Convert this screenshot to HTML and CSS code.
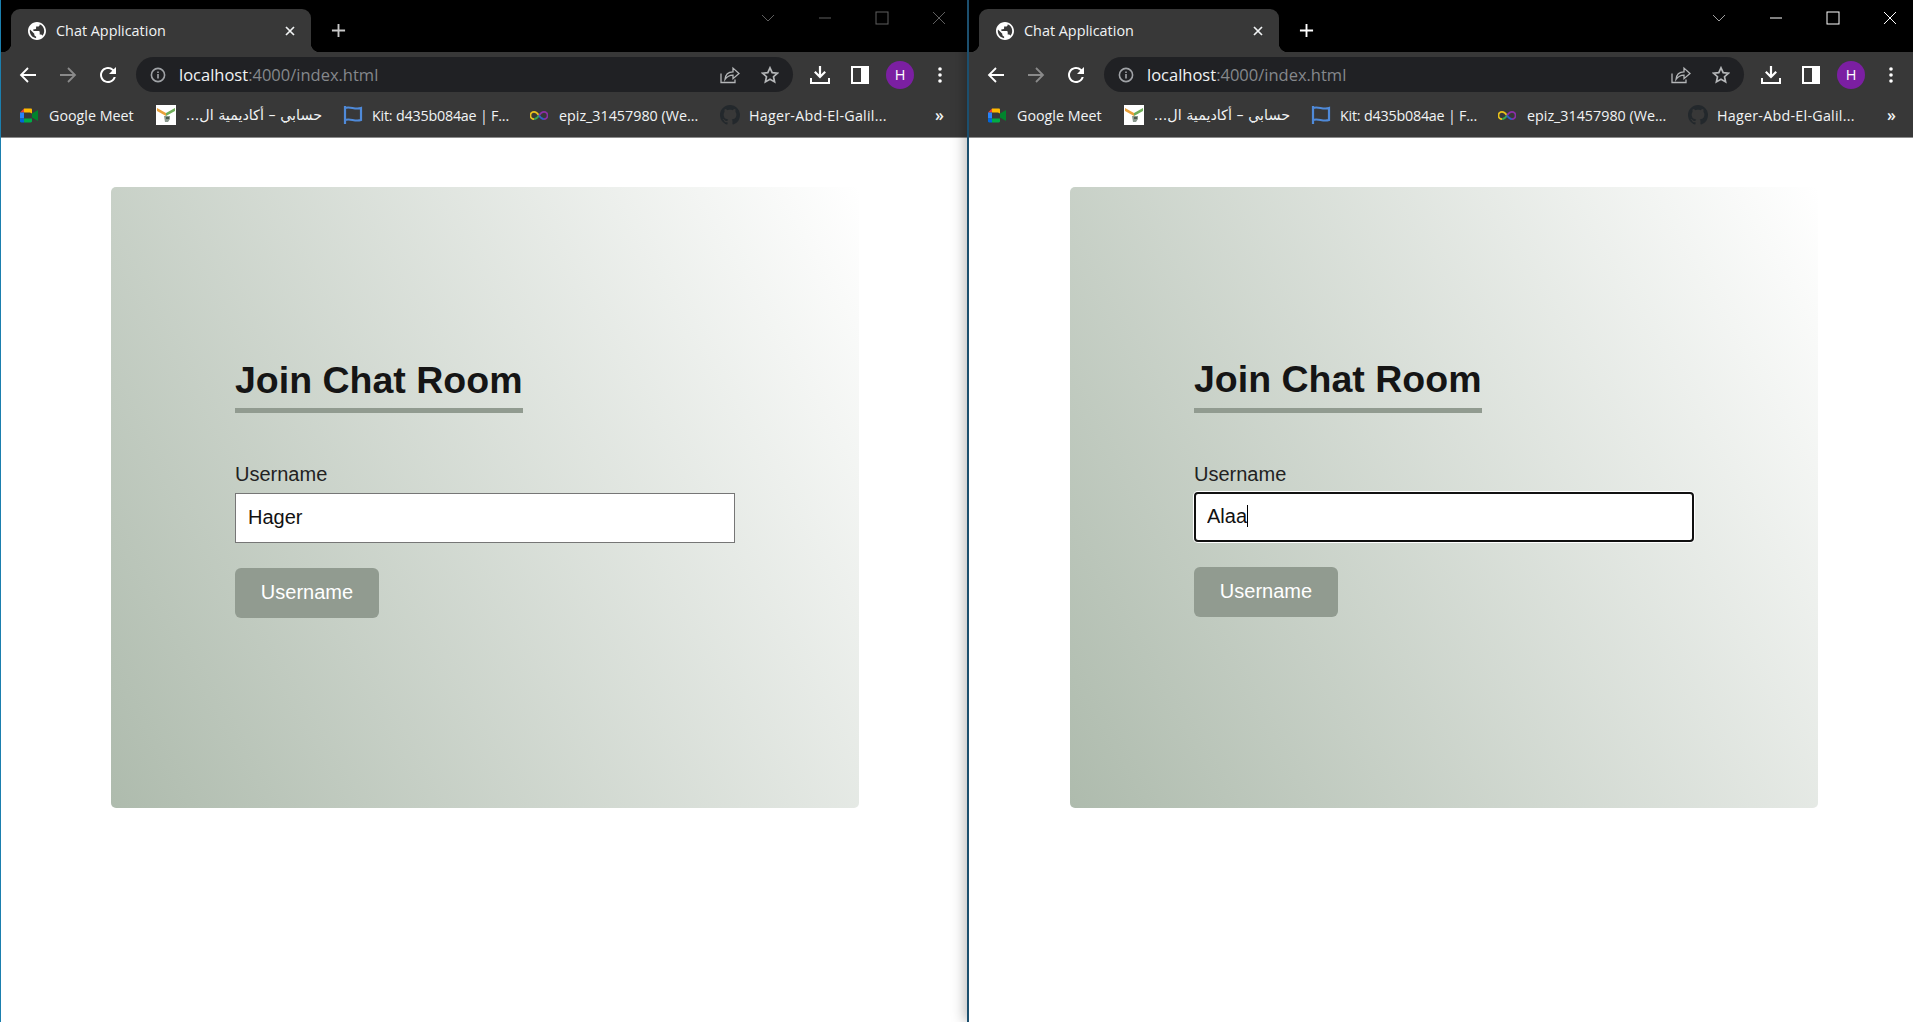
FILE: index.html
```html
<!DOCTYPE html>
<html lang="en">
<head>
    <meta charset="UTF-8">
    <meta name="viewport" content="width=device-width, initial-scale=1.0">
    <title>Chat Application</title>
    <link rel="stylesheet" href="styles.css">
</head>
<body>

<svg class="sprites" xmlns="http://www.w3.org/2000/svg">
    <symbol id="i-globe" viewBox="2 2 20 20"><path fill="#fff" d="M12 2C6.48 2 2 6.48 2 12s4.48 10 10 10 10-4.48 10-10S17.52 2 12 2zm-1 17.93c-3.95-.49-7-3.85-7-7.93 0-.62.08-1.21.21-1.79L9 15v1c0 1.1.9 2 2 2v1.93zm6.9-2.54c-.26-.81-1-1.39-1.9-1.39h-1v-3c0-.55-.45-1-1-1H8v-2h2c.55 0 1-.45 1-1V7h2c1.1 0 2-.9 2-2v-.41c2.93 1.19 5 4.06 5 7.41 0 2.08-.8 3.97-2.1 5.39z"/></symbol>
    <symbol id="i-close" viewBox="0 0 12 12"><path d="M2 2l8 8M10 2l-8 8" stroke="currentColor" stroke-width="1.7" fill="none"/></symbol>
    <symbol id="i-plus" viewBox="0 0 16 16"><path d="M8 1v14M1 8h14" stroke="currentColor" stroke-width="2" fill="none"/></symbol>
    <symbol id="i-back" viewBox="0 0 18 18"><path d="M17 9H2M9 2L2 9l7 7" stroke="currentColor" stroke-width="1.8" fill="none"/></symbol>
    <symbol id="i-forward" viewBox="0 0 18 18"><path d="M1 9h15M9 2l7 7-7 7" stroke="currentColor" stroke-width="1.8" fill="none"/></symbol>
    <symbol id="i-reload" viewBox="3 3 18 18"><path fill="currentColor" d="M17.65 6.35A7.95 7.95 0 0 0 12 4c-4.42 0-7.99 3.58-7.99 8s3.57 8 7.99 8c3.73 0 6.84-2.55 7.73-6h-2.08A5.99 5.99 0 0 1 12 18c-3.31 0-6-2.69-6-6s2.69-6 6-6c1.66 0 3.14.69 4.22 1.78L13 11h7V4l-2.35 2.35z"/></symbol>
    <symbol id="i-info" viewBox="0 0 16 16"><circle cx="8" cy="8" r="6.6" stroke="currentColor" stroke-width="1.6" fill="none"/><path d="M7.2 7h1.6v4.6H7.2zM7.2 4.4h1.6V6H7.2z" fill="currentColor"/></symbol>
    <symbol id="i-share" viewBox="0 0 20 18"><path d="M1 8v9h14v-3" stroke="currentColor" stroke-width="1.3" fill="none"/><path d="M5 14c.4-5 3.6-7.6 8-7.6V2.6l6 5.4-6 5.2V9.600c-3.500 0-6 1.400-8 4.400z" stroke="currentColor" stroke-width="1.3" fill="none"/></symbol>
    <symbol id="i-star" viewBox="0 0 18 18"><path d="M9 1.800l2.200 4.800 5.200.6-3.900 3.500 1.100 5.200L9 13.300l-4.600 2.600 1.100-5.200L1.600 7.200l5.200-.6z" stroke="currentColor" stroke-width="1.700" fill="none"/></symbol>
    <symbol id="i-download" viewBox="0 0 20 19"><path d="M10 1v10M4.800 6.800l5.200 5.200 5.200-5.200" stroke="currentColor" stroke-width="2.200" fill="none"/><path d="M1 13v5h18v-5" stroke="currentColor" stroke-width="2" fill="none"/></symbol>
    <symbol id="i-panel" viewBox="0 0 18 18"><path fill="currentColor" fill-rule="evenodd" d="M0 0h18v18H0zM2 2v14h8V2z"/></symbol>
    <symbol id="i-dots" viewBox="0 0 4 16"><circle cx="2" cy="2" r="1.800" fill="currentColor"/><circle cx="2" cy="8" r="1.800" fill="currentColor"/><circle cx="2" cy="14" r="1.800" fill="currentColor"/></symbol>
    <symbol id="i-chevron" viewBox="0 0 14 8"><path d="M1 1l6 6 6-6" stroke="currentColor" stroke-width="1" fill="none"/></symbol>
    <symbol id="i-min" viewBox="0 0 14 14"><path d="M1 7h12" stroke="currentColor" stroke-width="1" fill="none"/></symbol>
    <symbol id="i-max" viewBox="0 0 14 14"><rect x="1" y="1" width="12" height="12" stroke="currentColor" stroke-width="1" fill="none"/></symbol>
    <symbol id="i-x" viewBox="0 0 14 14"><path d="M1 1l12 12M13 1L1 13" stroke="currentColor" stroke-width="1" fill="none"/></symbol>
    <symbol id="i-meet" viewBox="0 0 18 14">
        <path fill="#ea4335" d="M4 0v4H0z"/>
        <path fill="#2684fc" d="M0 4h4v6H0z"/>
        <path fill="#0066da" d="M0 10h4v4H1.200C.5 14 0 13.500 0 12.800z"/>
        <path fill="#ffba00" d="M4 0h6.800c.7 0 1.200.5 1.200 1.200V5l-2-1H4z"/>
        <path fill="#00ac47" d="M4 10h8v2.800c0 .7-.5 1.200-1.200 1.200H4z"/>
        <path fill="#00832d" d="M12 5l1-.5L18 1.500v11L13 9.500 12 9z"/>
    </symbol>
    <symbol id="i-academy" viewBox="0 0 20 20">
        <rect width="20" height="20" fill="#fff"/>
        <path fill="#e9a13b" d="M1 3l9 5v3L1 6z"/>
        <path fill="#6fae5a" d="M19 3l-9 5v3l9-5z"/>
        <path fill="#8a9a8e" d="M8 11h6v3l-2 3H9z"/>
        <path fill="#4a5a50" d="M10 12h3v2h-3z"/>
    </symbol>
    <symbol id="i-flag" viewBox="0 0 20 20"><path d="M2 1v18M2 3c5-2 10 2 16 0v12c-6 2-11-2-16 0" stroke="#4f8ad9" stroke-width="2.200" fill="none"/></symbol>
    <symbol id="i-infinity" viewBox="0 0 20 10">
        <path d="M10 5C8 2 6.500 1 4.500 1a4 4 0 0 0 0 8" stroke="#e9c21b" stroke-width="2" fill="none"/>
        <path d="M4.500 9C6.500 9 8 8 10 5" stroke="#35a853" stroke-width="2" fill="none"/>
        <path d="M10 5c2-3 3.500-4 5.500-4a4 4 0 0 1 0 8" stroke="#8a2ea8" stroke-width="2" fill="none"/>
        <path d="M15.500 9c-2 0-3.500-1-5.500-4" stroke="#2f5fc9" stroke-width="2" fill="none"/>
    </symbol>
    <symbol id="i-github" viewBox="0 0 16 16"><path fill="#23282c" d="M8 0C3.580 0 0 3.580 0 8c0 3.540 2.290 6.530 5.470 7.590.4.07.55-.17.55-.38 0-.19-.01-.82-.01-1.490-2.010.37-2.530-.49-2.690-.94-.09-.23-.48-.94-.82-1.130-.28-.15-.68-.52-.01-.53.63-.01 1.080.58 1.230.82.72 1.210 1.870.87 2.330.66.07-.52.28-.87.51-1.070-1.780-.2-3.640-.89-3.640-3.950 0-.87.31-1.590.82-2.150-.08-.2-.36-1.020.08-2.120 0 0 .67-.21 2.200.82.64-.18 1.320-.27 2-.27.68 0 1.360.09 2 .27 1.530-1.040 2.200-.82 2.200-.82.44 1.100.16 1.920.08 2.120.51.56.82 1.270.82 2.150 0 3.070-1.870 3.750-3.650 3.950.29.25.54.73.54 1.480 0 1.070-.01 1.930-.01 2.200 0 .21.15.46.55.38A8.013 8.013 0 0 0 16 8c0-4.420-3.580-8-8-8z"/></symbol>
</svg>

<div class="desktop">

    <!-- left window -->
    <section class="window window-left">
        <div class="tabstrip">
            <div class="tab">
                <svg class="tab-favicon"><use href="#i-globe"/></svg>
                <span class="tab-title">Chat Application</span>
                <svg class="tab-close"><use href="#i-close"/></svg>
            </div>
            <svg class="new-tab"><use href="#i-plus"/></svg>
            <div class="win-controls">
                <span class="win-btn win-chevron"><svg class="ic-chevron"><use href="#i-chevron"/></svg></span>
                <span class="win-btn"><svg class="ic-win"><use href="#i-min"/></svg></span>
                <span class="win-btn"><svg class="ic-win"><use href="#i-max"/></svg></span>
                <span class="win-btn"><svg class="ic-win"><use href="#i-x"/></svg></span>
            </div>
        </div>
        <div class="toolbar">
            <span class="tool"><svg class="ic-18"><use href="#i-back"/></svg></span>
            <span class="tool tool-dim"><svg class="ic-18"><use href="#i-forward"/></svg></span>
            <span class="tool"><svg class="ic-18"><use href="#i-reload"/></svg></span>
            <div class="omnibox">
                <svg class="omni-info"><use href="#i-info"/></svg>
                <span class="omni-url">localhost<span class="omni-rest">:4000/index.html</span></span>
                <span class="tool tool-grey omni-share"><svg class="ic-20"><use href="#i-share"/></svg></span>
                <span class="tool tool-grey"><svg class="ic-18"><use href="#i-star"/></svg></span>
            </div>
            <span class="tool tool-first"><svg class="ic-20"><use href="#i-download"/></svg></span>
            <span class="tool"><svg class="ic-18"><use href="#i-panel"/></svg></span>
            <span class="tool"><span class="avatar">H</span></span>
            <span class="tool"><svg class="ic-dots"><use href="#i-dots"/></svg></span>
        </div>
        <div class="bookmarks">
            <span class="bm"><svg class="bm-icon bm-meet"><use href="#i-meet"/></svg><span class="bm-text w-86">Google Meet</span></span>
            <span class="bm"><svg class="bm-icon"><use href="#i-academy"/></svg><span class="bm-text w-137 bm-ar" dir="rtl">حسابي – أكاديمية ال...</span></span>
            <span class="bm"><svg class="bm-icon"><use href="#i-flag"/></svg><span class="bm-text w-137 bm-tight">Kit: d435b084ae | F...</span></span>
            <span class="bm"><svg class="bm-icon bm-inf"><use href="#i-infinity"/></svg><span class="bm-text w-140">epiz_31457980 (We...</span></span>
            <span class="bm"><svg class="bm-icon"><use href="#i-github"/></svg><span class="bm-text w-137 bm-wide">Hager-Abd-El-Galil...</span></span>
            <span class="bm-more">»</span>
        </div>
        <div class="page">
            <div class="card">
                <h1 class="card-title">Join Chat Room</h1>
                <form class="join-form">
                    <label class="field-label">Username</label>
                    <input class="field-input" type="text" value="Hager">
                    <button class="join-btn" type="button">Username</button>
                </form>
            </div>
        </div>
    </section>

    <!-- right window, this one has the focus -->
    <section class="window window-right">
        <div class="tabstrip">
            <div class="tab">
                <svg class="tab-favicon"><use href="#i-globe"/></svg>
                <span class="tab-title">Chat Application</span>
                <svg class="tab-close"><use href="#i-close"/></svg>
            </div>
            <svg class="new-tab"><use href="#i-plus"/></svg>
            <div class="win-controls">
                <span class="win-btn win-chevron"><svg class="ic-chevron"><use href="#i-chevron"/></svg></span>
                <span class="win-btn"><svg class="ic-win"><use href="#i-min"/></svg></span>
                <span class="win-btn"><svg class="ic-win"><use href="#i-max"/></svg></span>
                <span class="win-btn"><svg class="ic-win"><use href="#i-x"/></svg></span>
            </div>
        </div>
        <div class="toolbar">
            <span class="tool"><svg class="ic-18"><use href="#i-back"/></svg></span>
            <span class="tool tool-dim"><svg class="ic-18"><use href="#i-forward"/></svg></span>
            <span class="tool"><svg class="ic-18"><use href="#i-reload"/></svg></span>
            <div class="omnibox">
                <svg class="omni-info"><use href="#i-info"/></svg>
                <span class="omni-url">localhost<span class="omni-rest">:4000/index.html</span></span>
                <span class="tool tool-grey omni-share"><svg class="ic-20"><use href="#i-share"/></svg></span>
                <span class="tool tool-grey"><svg class="ic-18"><use href="#i-star"/></svg></span>
            </div>
            <span class="tool tool-first"><svg class="ic-20"><use href="#i-download"/></svg></span>
            <span class="tool"><svg class="ic-18"><use href="#i-panel"/></svg></span>
            <span class="tool"><span class="avatar">H</span></span>
            <span class="tool"><svg class="ic-dots"><use href="#i-dots"/></svg></span>
        </div>
        <div class="bookmarks">
            <span class="bm"><svg class="bm-icon bm-meet"><use href="#i-meet"/></svg><span class="bm-text w-86">Google Meet</span></span>
            <span class="bm"><svg class="bm-icon"><use href="#i-academy"/></svg><span class="bm-text w-137 bm-ar" dir="rtl">حسابي – أكاديمية ال...</span></span>
            <span class="bm"><svg class="bm-icon"><use href="#i-flag"/></svg><span class="bm-text w-137 bm-tight">Kit: d435b084ae | F...</span></span>
            <span class="bm"><svg class="bm-icon bm-inf"><use href="#i-infinity"/></svg><span class="bm-text w-140">epiz_31457980 (We...</span></span>
            <span class="bm"><svg class="bm-icon"><use href="#i-github"/></svg><span class="bm-text w-137 bm-wide">Hager-Abd-El-Galil...</span></span>
            <span class="bm-more">»</span>
        </div>
        <div class="page">
            <div class="card">
                <h1 class="card-title">Join Chat Room</h1>
                <form class="join-form">
                    <label class="field-label">Username</label>
                    <div class="input-wrap">
                        <input class="field-input field-focus" type="text" value="Alaa">
                        <span class="caret"></span>
                    </div>
                    <button class="join-btn" type="button">Username</button>
                </form>
            </div>
        </div>
    </section>

</div>

</body>
</html>
```

FILE: styles.css
```css
:root{
    --chrome-bg: #383838;
    --chrome-omni: #202124;
    --chrome-text: #f1f3f4;
    --btn-green: #919b90;
}

*{
    box-sizing: border-box;
}

html,body{
    margin: 0;
    height: 100%;
    overflow: hidden;
    background: #fff;
}

.sprites{
    display: none;
}

.desktop{
    display: flex;
    height: 100vh;
    font-family: "Open Sans", "Noto Sans", sans-serif;
}

.window{
    display: flex;
    flex-direction: column;
    background: #fff;
}
.window-left{
    width: 967px;
    border-left: 1px solid #1b7fae;
}
.window-right{
    position: relative;
    width: 946px;
    border-left: 2px solid #1c4f6e;
    box-shadow: -3px 0 12px rgba(0,0,0,0.25);
}

/* tab strip */
.tabstrip{
    display: flex;
    height: 52px;
    background: #000;
    padding: 9px 0 0 10px;
}
.tab{
    position: relative;
    display: flex;
    align-items: center;
    width: 300px;
    height: 43px;
    padding: 0 12px 0 17px;
    background: var(--chrome-bg);
    border-radius: 9px 9px 0 0;
    color: var(--chrome-text);
}
.tab::before,.tab::after{
    content: "";
    position: absolute;
    bottom: 0;
    width: 9px;
    height: 9px;
}
.tab::before{
    left: -9px;
    background: radial-gradient(circle at 0 0, transparent 9px, var(--chrome-bg) 9.5px);
}
.tab::after{
    right: -9px;
    background: radial-gradient(circle at 100% 0, transparent 9px, var(--chrome-bg) 9.5px);
}
.tab-favicon{
    width: 18px;
    height: 18px;
    margin-right: 10px;
    flex: none;
}
.tab-title{
    flex: 1;
    font-size: 14.400px;
    white-space: nowrap;
}
.tab-close{
    width: 12px;
    height: 12px;
    flex: none;
    margin-right: 3px;
    color: #f1f3f4;
}
.new-tab{
    width: 15px;
    height: 15px;
    margin: 14px 0 0 20px;
    color: #fff;
}
.window-left .new-tab{
    color: #c8c8c8;
}

.win-controls{
    display: flex;
    margin: -9px 0 0 auto;
    height: 36px;
}
.win-btn{
    display: flex;
    align-items: center;
    justify-content: center;
    width: 57px;
    color: #fff;
}
.window-left .win-btn{
    color: #5f5f5f;
}
.window-right .win-controls{
    margin-right: -5px;
}
.win-chevron{
    color: #a0a0a0;
}
.ic-chevron{
    width: 14px;
    height: 8px;
}
.ic-win{
    width: 14px;
    height: 14px;
}

/* toolbar */
.toolbar{
    display: flex;
    align-items: center;
    height: 45px;
    padding: 5px 7px 5px 7px;
    background: var(--chrome-bg);
    color: #fff;
}
.window-right .toolbar{
    padding-right: 2px;
}
.tool{
    display: flex;
    align-items: center;
    justify-content: center;
    width: 40px;
    height: 35px;
    flex: none;
}
.tool-dim{
    color: #8a8a8a;
}
.tool-grey{
    color: #b4b6b8;
}
.tool-first{
    margin-left: 7px;
}
.ic-18{
    width: 18px;
    height: 18px;
}
.ic-20{
    width: 20px;
    height: 19px;
}
.ic-dots{
    width: 4px;
    height: 16px;
}
.avatar{
    display: flex;
    align-items: center;
    justify-content: center;
    width: 28px;
    height: 28px;
    border-radius: 50%;
    background: #7b1fa2;
    color: #fff;
    font-size: 14.500px;
}

.omnibox{
    display: flex;
    flex: 1;
    align-items: center;
    height: 35px;
    margin-left: 8px;
    padding: 0 3px 0 14px;
    background: var(--chrome-omni);
    border-radius: 18px;
}
.omni-info{
    width: 16px;
    height: 16px;
    color: #a0a3a7;
    flex: none;
}
.omni-url{
    margin-left: 13px;
    font-size: 16.500px;
    color: #f1f3f4;
    white-space: nowrap;
}
.omni-rest{
    color: #85888c;
}
.omni-share{
    margin-left: auto;
}

/* bookmarks */
.bookmarks{
    display: flex;
    align-items: center;
    gap: 21px;
    height: 41px;
    padding: 0 0 4px 19px;
    background: var(--chrome-bg);
    border-bottom: 1px solid #8c8c8c;
    color: var(--chrome-text);
    font-size: 14.300px;
}
.bm{
    display: flex;
    align-items: center;
    gap: 9px;
    flex: none;
}
.bm-icon{
    width: 20px;
    height: 20px;
    flex: none;
}
.bm-meet{
    height: 15px;
    width: 18px;
    margin-right: 2px;
}
.bm-inf{
    width: 18px;
    height: 9px;
    margin-right: 2px;
}
.bm-text{
    white-space: nowrap;
}
.bm-ar{
    font-family: "DejaVu Sans", sans-serif;
    font-size: 14.300px;
}
.bm-tight{
    letter-spacing: -0.2px;
}
.bm-wide{
    letter-spacing: 0.25px;
}
.w-86{
    width: 86px;
}
.w-137{
    width: 137px;
}
.w-140{
    width: 140px;
}
.bm-more{
    margin-left: auto;
    margin-right: 23px;
    font-size: 16px;
    font-weight: 600;
    line-height: 1;
}
.window-right .bm-more{
    margin-right: 17px;
}

/* the chat join page */
.page{
    flex: 1;
    padding: 49px 0 0 110px;
}
.window-right .page{
    padding-left: 101px;
}
.card{
    width: 748px;
    height: 621px;
    padding: 172px 0 0 124px;
    background: linear-gradient(60deg, #aebbad, #fff);
    border-radius: 5px;
    font-family: "Liberation Sans", Arial, sans-serif;
}
.card-title{
    display: inline-block;
    margin: 0 0 50px;
    padding-bottom: 6px;
    border-bottom: 5px solid var(--btn-green);
    color: #151515;
    font-size: 37.500px;
    font-weight: bold;
    line-height: 43px;
}
.window-right .card-title{
    margin-top: -1px;
    padding-bottom: 7px;
}
.join-form{
    display: flex;
    flex-direction: column;
    align-items: flex-start;
}
.field-label{
    margin-bottom: 7px;
    color: #222;
    font-size: 20px;
    line-height: 23px;
}
.field-input{
    display: block;
    width: 500px;
    height: 50px;
    margin-bottom: 25px;
    padding: 0 12px 2px;
    border: 1px solid #767676;
    border-radius: 0;
    background: #fff;
    color: #111;
    font-family: inherit;
    font-size: 20px;
}
.input-wrap{
    position: relative;
    margin-top: -1px;
}
.field-focus{
    border: 2px solid #111;
    border-radius: 4px;
    padding: 0 11px 2px;
    box-shadow: 0 0 0 1px #fff;
}
.caret{
    position: absolute;
    left: 53px;
    top: 13px;
    width: 1px;
    height: 22px;
    background: #000;
}
.join-btn{
    width: 144px;
    height: 50px;
    padding: 0 0 2px;
    border: none;
    border-radius: 6px;
    background: var(--btn-green);
    color: #fff;
    font-family: inherit;
    font-size: 20px;
}
```
